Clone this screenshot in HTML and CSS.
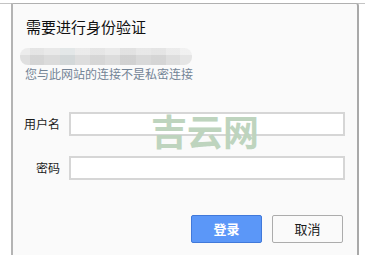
FILE: index.html
```html
<!DOCTYPE html>
<html lang="zh-CN">
<head>
<meta charset="utf-8">
<title>需要进行身份验证</title>
<link rel="stylesheet" href="styles.css">
</head>
<body>
<div class="frame">
  <div class="dialog">
    <h1 class="title">需要进行身份验证</h1>
    <div class="blur" aria-hidden="true"></div>
    <p class="sub">您与此网站的连接不是私密连接</p>
    <div class="form">
      <div class="row">
        <label class="label">用户名</label>
        <input class="field" type="text">
      </div>
      <div class="row">
        <label class="label">密码</label>
        <input class="field" type="password">
      </div>
    </div>
    <div class="actions">
      <button class="btn primary">登录</button>
      <button class="btn">取消</button>
    </div>
    <div class="watermark">吉云网</div>
  </div>
</div>
</body>
</html>
```

FILE: styles.css
```css
html, body {
  margin: 0;
  padding: 0;
  background: #ffffff;
  height: 100%;
  overflow: hidden;
}
body {
  font-family: "Noto Sans CJK SC", "Noto Sans", sans-serif;
  padding-top: 3px;
  box-sizing: border-box;
}
.frame {
  border-top: 1px solid #c4c4c4;
  height: 260px;
}
.dialog {
  position: relative;
  margin-left: 11px;
  width: 348px;
  height: 260px;
  margin-top: -1px;
  border-top: 1px solid #b0b0b0;
  border-left: 2px solid #b4b4b4;
  border-right: 2px solid #a9a9a9;
  border-top-right-radius: 3px;
  background: #fafafa;
  padding: 14px 0 0 0;
  box-sizing: border-box;
}
.title {
  margin: 0 0 0 13px;
  font-size: 15px;
  line-height: 18px;
  font-weight: normal;
  color: #111111;
}
.blur {
  margin: 12px 0 0 7px;
  width: 172px;
  height: 17px;
  border-radius: 8px;
  background:
    linear-gradient(to bottom, rgba(255,255,255,0.25) 0, rgba(255,255,255,0.25) 7px, rgba(0,0,0,0.03) 7px, rgba(0,0,0,0.03) 17px),
    linear-gradient(to right,
      #e6e6e6 0, #e6e6e6 10px,
      #dcdcdc 10px, #dcdcdc 24px,
      #e2e2e2 24px, #e2e2e2 40px,
      #dadfe0 40px, #dadfe0 55px,
      #e4e4e4 55px, #e4e4e4 70px,
      #dddddd 70px, #dddddd 85px,
      #e3e3e3 85px, #e3e3e3 100px,
      #d8d8d8 100px, #d8d8d8 116px,
      #e0e0e0 116px, #e0e0e0 131px,
      #dcdcdc 131px, #dcdcdc 146px,
      #e5e5e5 146px, #e5e5e5 160px,
      #ececec 160px, #ececec 172px);
}
.sub {
  margin: 1px 0 0 12px;
  font-size: 12px;
  line-height: 15px;
  color: #738496;
}
.form {
  margin-top: 31px;
  display: flex;
  flex-direction: column;
  gap: 20px;
}
.row {
  display: flex;
  align-items: center;
  gap: 9px;
}
.label {
  width: 47px;
  text-align: right;
  font-size: 12px;
  line-height: 24px;
  color: #1a1a1a;
}
.field {
  width: 276px;
  height: 24px;
  margin: 0;
  padding: 0 4px;
  box-sizing: border-box;
  border: 2px solid #d6d6d6;
  background: #ffffff;
  outline: none;
}
.actions {
  margin-top: 35px;
  display: flex;
  justify-content: flex-end;
  gap: 10px;
  padding-right: 14px;
}
.btn {
  width: 71px;
  height: 28px;
  margin: 0;
  padding: 0;
  border: 1px solid #acacac;
  border-radius: 2px;
  background: #fafafa;
  color: #1a1a1a;
  font-family: "Noto Sans CJK SC", sans-serif;
  font-size: 13px;
  line-height: 26px;
}
.btn.primary {
  background: #5b97f8;
  border-color: #4179da;
  color: #ffffff;
  font-weight: bold;
}
.watermark {
  position: absolute;
  left: 138px;
  top: 106px;
  font-size: 36px;
  line-height: 40px;
  font-weight: bold;
  color: #bed4be;
  pointer-events: none;
}
```
